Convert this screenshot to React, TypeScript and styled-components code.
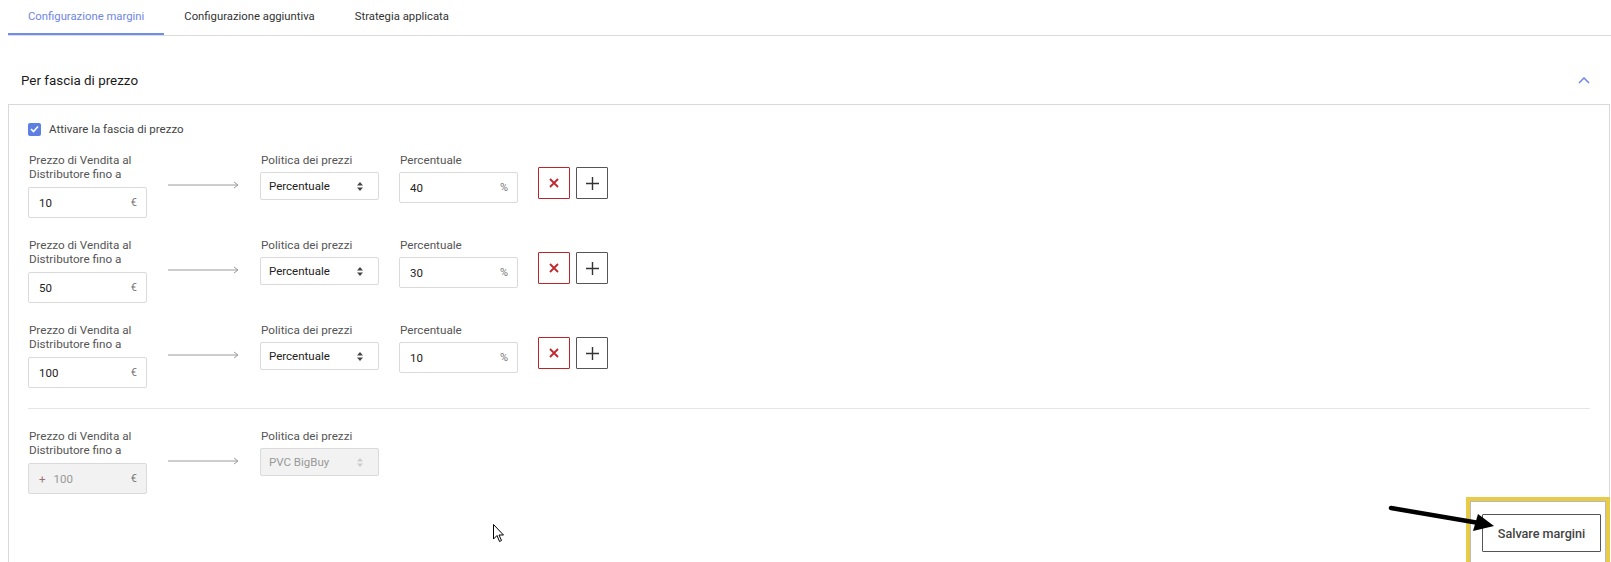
import styled, { createGlobalStyle } from 'styled-components'

const GlobalStyle = createGlobalStyle`
  body {
    margin: 0;
    background: #fff;
    font-family: Roboto, "Liberation Sans", Arial, sans-serif;
  }
  * { box-sizing: border-box; }
`

const Page = styled.div`
  position: relative;
  height: 562px;
  overflow: hidden;
  padding-left: 8px;
`

const TabBar = styled.div`
  display: flex;
  border-bottom: 1px solid #dcdcdc;
`

const Tab = styled.div<{ $active?: boolean }>`
  height: 35px;
  padding: 0 20px 1px;
  display: flex;
  align-items: center;
  font-size: 11.3px;
  color: ${p => (p.$active ? '#6f86e6' : '#333')};
  border-bottom: 2px solid ${p => (p.$active ? '#6f8cf0' : 'transparent')};
`

const Header = styled.div`
  margin-top: 20px;
  height: 48px;
  padding: 0 21px 0 13px;
  display: flex;
  align-items: center;
  justify-content: space-between;
  font-size: 13.4px;
  color: #1a1a1a;
`

const Panel = styled.div`
  margin-right: 1px;
  border: 1px solid #d9d9d9;
  border-bottom: none;
  padding: 17px 8px 0 19px;
  height: 500px;
`

const CheckRow = styled.label`
  display: flex;
  align-items: center;
  gap: 8px;
  height: 14px;
  font-size: 11.5px;
  color: #444;
  margin-bottom: 17px;
`

const CheckBox = styled.span`
  width: 13px;
  height: 13px;
  border-radius: 2px;
  background: #5d7fe2;
  display: flex;
  align-items: center;
  justify-content: center;
`

const Row = styled.div`
  display: flex;
  align-items: flex-start;
  height: 65px;
  & + & {
    margin-top: 20px;
  }
`

const Col = styled.div<{ $gap?: number }>`
  width: 119px;
  margin-left: ${p => p.$gap ?? 0}px;
  display: flex;
  flex-direction: column;
`

const Label = styled.div`
  font-size: 11.7px;
  line-height: 14px;
  color: #555;
  padding-left: 1px;
`

const Field = styled.div<{ $top: number; $h: number; $pad?: number; $disabled?: boolean }>`
  margin-top: ${p => p.$top}px;
  height: ${p => p.$h}px;
  border: 1px solid #dadada;
  border-radius: 2px;
  background: ${p => (p.$disabled ? '#f2f2f2' : '#fff')};
  display: flex;
  align-items: center;
  padding: 0 9px 0 ${p => p.$pad ?? 10}px;
  font-size: 11.5px;
  color: ${p => (p.$disabled ? '#999' : '#222')};
`

const Value = styled.span`
  flex: 1;
`

const Unit = styled.span`
  font-size: 11px;
  color: #777;
`

const Plus = styled.span`
  color: #a07070;
  margin-right: 8px;
`

const ArrowBox = styled.div`
  width: 71px;
  margin-left: 21px;
  margin-top: 28px;
  height: 8px;
  display: flex;
`

const Buttons = styled.div`
  margin-left: 20px;
  margin-top: 14px;
  display: flex;
  gap: 6px;
`

const IconButton = styled.button<{ $danger?: boolean }>`
  width: 32px;
  height: 32px;
  padding: 0;
  background: #fff;
  border: 1px solid ${p => (p.$danger ? '#b8262b' : '#555')};
  border-radius: 1px;
  display: flex;
  align-items: center;
  justify-content: center;
`

const Separator = styled.div`
  margin: 20px 11px 20px 0;
  border-top: 1px solid #e6e6e6;
`

const Footer = styled.div`
  display: flex;
  justify-content: flex-end;
  margin-top: 20px;
`

const SaveWrap = styled.div`
  position: relative;
`

const SaveButton = styled.button`
  width: 119px;
  height: 38px;
  background: #fff;
  border: 1px solid #555;
  border-radius: 1px;
  font-family: inherit;
  font-size: 12.6px;
  font-weight: 500;
  color: #444;
`

const Highlight = styled.div`
  position: absolute;
  left: -16px;
  top: -17px;
  right: -9px;
  bottom: -30px;
  border: 4px solid #e8cb47;
  box-shadow: inset 0 0 0 1px #b9b9b9;
  pointer-events: none;
`

const Pointer = styled.svg`
  position: absolute;
  left: -95px;
  top: -12px;
`

const Cursor = styled.svg`
  position: absolute;
  left: 493px;
  top: 524px;
`

const SortWrap = styled.span`
  display: flex;
  margin-right: 6px;
`

const SortIcon = ({ color }: { color: string }) => (
  <svg width="6" height="9" viewBox="0 0 6 9">
    <path d="M3 0 L6 3.6 H0 Z M3 9 L6 5.4 H0 Z" fill={color} />
  </svg>
)

const Arrow = () => (
  <svg width="71" height="8" viewBox="0 0 71 8">
    <path d="M0 4 H70 M66 1 L70 4 L66 7" stroke="#9a9a9a" strokeWidth="1" fill="none" />
  </svg>
)

const XIcon = () => (
  <svg width="10" height="10" viewBox="0 0 10 10">
    <path d="M1 1 L9 9 M9 1 L1 9" stroke="#c0272d" strokeWidth="1.8" />
  </svg>
)

const PlusIcon = () => (
  <svg width="13" height="13" viewBox="0 0 13 13">
    <path d="M6.5 0 V13 M0 6.5 H13" stroke="#333" strokeWidth="1.4" />
  </svg>
)

const SelectBox = ({ text, disabled }: { text: string; disabled?: boolean }) => (
  <Field $top={5} $h={28} $pad={8} $disabled={disabled}>
    <Value>{text}</Value>
    <SortWrap>
      <SortIcon color={disabled ? '#ccc' : '#444'} />
    </SortWrap>
  </Field>
)

const PriceLabel = () => (
  <Label>
    Prezzo di Vendita al
    <br />
    Distributore fino a
  </Label>
)

const bands = [
  { price: '10', pct: '40' },
  { price: '50', pct: '30' },
  { price: '100', pct: '10' },
]

function App() {
  return (
    <Page>
      <GlobalStyle />
      <TabBar>
        <Tab $active>Configurazione margini</Tab>
        <Tab>Configurazione aggiuntiva</Tab>
        <Tab>Strategia applicata</Tab>
      </TabBar>

      <Header>
        <span>Per fascia di prezzo</span>
        <svg width="12" height="7" viewBox="0 0 12 7">
          <path d="M1 6 L6 1 L11 6" stroke="#6f86e6" strokeWidth="1.5" fill="none" />
        </svg>
      </Header>

      <Panel>
        <CheckRow>
          <CheckBox>
            <svg width="9" height="8" viewBox="0 0 9 8">
              <path d="M1 4 L3.5 6.5 L8 1.5" stroke="#fff" strokeWidth="1.6" fill="none" />
            </svg>
          </CheckBox>
          Attivare la fascia di prezzo
        </CheckRow>

        {bands.map(b => (
          <Row key={b.price}>
            <Col>
              <PriceLabel />
              <Field $top={6} $h={31}>
                <Value>{b.price}</Value>
                <Unit>€</Unit>
              </Field>
            </Col>
            <ArrowBox>
              <Arrow />
            </ArrowBox>
            <Col $gap={21}>
              <Label>Politica dei prezzi</Label>
              <SelectBox text="Percentuale" />
            </Col>
            <Col $gap={20}>
              <Label>Percentuale</Label>
              <Field $top={5} $h={31}>
                <Value>{b.pct}</Value>
                <Unit>%</Unit>
              </Field>
            </Col>
            <Buttons>
              <IconButton $danger>
                <XIcon />
              </IconButton>
              <IconButton>
                <PlusIcon />
              </IconButton>
            </Buttons>
          </Row>
        ))}

        <Separator />

        <Row>
          <Col>
            <PriceLabel />
            <Field $top={6} $h={31} $disabled>
              <Plus>+</Plus>
              <Value>100</Value>
              <Unit>€</Unit>
            </Field>
          </Col>
          <ArrowBox>
            <Arrow />
          </ArrowBox>
          <Col $gap={21}>
            <Label>Politica dei prezzi</Label>
            <SelectBox text="PVC BigBuy" disabled />
          </Col>
        </Row>

        <Footer>
          <SaveWrap>
            <SaveButton>Salvare margini</SaveButton>
            <Highlight />
            <Pointer width="112" height="32" viewBox="0 0 112 32">
              <path d="M4 6 L92 21" stroke="#000" strokeWidth="4.5" strokeLinecap="round" />
              <path d="M107 24 L86 29 L91 12 Z" fill="#000" />
            </Pointer>
          </SaveWrap>
        </Footer>
      </Panel>

      <Cursor width="12" height="19" viewBox="0 0 12 19">
        <path d="M0.5 0.5 V15 L4 11.5 L6.5 17.5 L8.5 16.5 L6 11 H10.5 Z" fill="#fff" stroke="#000" strokeWidth="1" />
      </Cursor>
    </Page>
  )
}

export default App
